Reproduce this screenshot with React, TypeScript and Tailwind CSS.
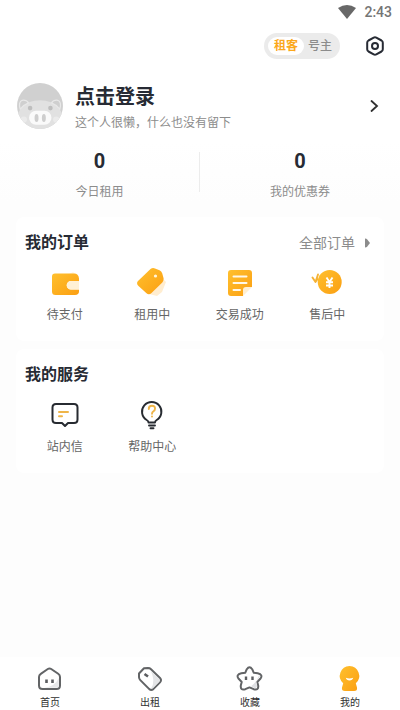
import { useState } from "react";
import type { ReactNode } from "react";

interface Entry {
  label: string;
  icon: ReactNode;
}

const Gradient = ({ id }: { id: string }) => (
  <defs>
    <linearGradient id={id} x1="0" y1="0" x2="1" y2="1">
      <stop offset="0" stopColor="#ffc02e" />
      <stop offset="1" stopColor="#fb9f12" />
    </linearGradient>
  </defs>
);

const WalletIcon = () => (
  <svg viewBox="0 0 32 32" className="size-8" aria-hidden="true">
    <Gradient id="wallet" />
    <path d="M20 7l4-2 4 3z" fill="#fff5e0" />
    <path
      d="M6 6.500h19q4.500 0 5 5V14h-8a4.300 4.300 0 0 0 0 8.600h8v2q0 3.400-4 3.400H6.500Q3 28 3 24.500v-15q0-3 3-3z"
      fill="url(#wallet)"
    />
    <path d="M22 14h8v8.600h-8a4.300 4.300 0 0 1 0-8.600z" fill="#fff1d6" />
  </svg>
);

const TagIcon = () => (
  <svg viewBox="0 0 32 32" className="size-8" aria-hidden="true">
    <Gradient id="tag" />
    <path d="M27 12l3 3-4 10-5 4-8-2z" fill="#ffedd0" />
    <path
      d="M14.500 2q2-1.400 4.500-.6l4.500 1.800q2 1 2.700 3l1.300 4.800q.5 2.500-1.200 4.500L15.500 26q-2.500 2.500-5 .3l-8-7.300q-2.600-2.500-.5-5z"
      fill="url(#tag)"
    />
    <circle cx="19.500" cy="9" r="1.600" fill="#fff6dc" />
  </svg>
);

const NoteIcon = () => (
  <svg viewBox="0 0 32 32" className="size-8" aria-hidden="true">
    <Gradient id="note" />
    <path d="M19 20h9l-9 9z" fill="#ffefd2" />
    <path
      d="M7 3h18q3 0 3 3v14h-6q-3 0-3 3v6H7q-3 0-3-3V6q0-3 3-3z"
      fill="url(#note)"
    />
    <path
      d="M9.500 9.500h13M9.500 16h13M9.500 23h6.500"
      stroke="#fff8e8"
      strokeWidth="2"
      strokeLinecap="round"
    />
  </svg>
);

const RefundIcon = () => (
  <svg viewBox="0 0 32 32" className="size-8" aria-hidden="true">
    <Gradient id="refund" />
    <path
      d="M1.500 10.500l3 4.500L7 7.500M6.500 12l-2 3"
      fill="none"
      stroke="#f5b235"
      strokeWidth="1.900"
      strokeLinecap="round"
      strokeLinejoin="round"
    />
    <circle cx="18.700" cy="15" r="12" fill="url(#refund)" />
    <path
      d="M15.500 10.500l3 4.500 3-4.500M18.500 15v6M15 15.300h7M15 18.500h7"
      fill="none"
      stroke="#fff"
      strokeWidth="1.900"
    />
  </svg>
);

const MessageIcon = () => (
  <svg
    viewBox="0 0 32 32"
    className="size-8"
    fill="none"
    strokeLinecap="round"
    strokeLinejoin="round"
    aria-hidden="true"
  >
    <path
      d="M7 5h18q3.500 0 3.500 3.500v12q0 3.500-3.500 3.500h-6L16 27l-3-3H7q-3.500 0-3.500-3.500v-12Q3.500 5 7 5z"
      stroke="#272b31"
      strokeWidth="2"
    />
    <path d="M10 13h9M10 17.300h3" stroke="#efb548" strokeWidth="2" />
  </svg>
);

const BulbIcon = () => (
  <svg
    viewBox="0 0 32 32"
    className="size-8"
    fill="none"
    strokeLinecap="round"
    strokeLinejoin="round"
    aria-hidden="true"
  >
    <path
      d="M12.500 23.500q0-1.500-1.800-2.500A9.700 9.700 0 1 1 20.700 21q-1.700 1-1.700 2.500zM13 26.500h6M14.500 29.300h3"
      stroke="#272b31"
      strokeWidth="1.900"
    />
    <path
      d="M12.800 10q0-3.200 3.200-3.200T19 9.700q0 1.800-1.800 2.800-1.200.8-1.200 2.300"
      stroke="#efb548"
      strokeWidth="1.900"
    />
    <circle cx="16" cy="17.500" r="1" fill="#efb548" />
  </svg>
);

const PigAvatar = () => (
  <svg viewBox="0 0 46 46" className="size-12 shrink-0" aria-hidden="true">
    <defs>
      <clipPath id="avatar">
        <circle cx="23" cy="23" r="22" />
      </clipPath>
    </defs>
    <g clipPath="url(#avatar)">
      <path d="M0 0h46v46H0z" fill="#d0d0d0" />
      <path d="M1 46q-2-15 5-22 6-6.500 17-6.500T40 24q7 7 5 22z" fill="#e1e1e1" />
      <path
        d="M4 26q-2-7 2-8.500 4-.5 6 2.500-5 2-8 6zM42 26q2-7-2-8.500-4-.5-6 2.500 5 2 8 6z"
        fill="#cfcfcf"
        stroke="#e8e8e8"
        strokeWidth="1.200"
      />
      <circle cx="7.500" cy="36" r="3" fill="#ebebeb" />
      <circle cx="38.500" cy="36" r="3" fill="#ebebeb" />
      <circle cx="13.500" cy="25" r="2.200" fill="#bebebe" />
      <circle cx="33" cy="25" r="2.200" fill="#bebebe" />
      <rect x="12.500" y="27.500" width="21.500" height="13.500" rx="6.700" fill="#fafafa" />
      <ellipse cx="19.700" cy="34.500" rx="1.900" ry="3.800" fill="#cecece" />
      <ellipse cx="26.700" cy="34.500" rx="1.900" ry="3.800" fill="#cecece" />
    </g>
  </svg>
);

const HomeIcon = () => (
  <svg viewBox="0 0 28 28" className="size-7" aria-hidden="true">
    <path
      d="M11.800 4q1.700-1.200 3.400 0l7 4.800q1.800 1.200 1.800 3.200v8.500q0 3.500-3.500 3.500h-14Q3 24 3 20.500V12q0-2 1.800-3.200z"
      fill="#fff"
      stroke="#626466"
      strokeWidth="2"
    />
    <path d="M22.800 13v7.500q0 2.300-2.300 2.300H8q11-1 14.800-9.800z" fill="#e6e7e9" />
    <path d="M10.500 14.500v3.500M16.500 14.500v3.500" stroke="#5b5d60" strokeWidth="2.600" />
  </svg>
);

const RentIcon = () => (
  <svg viewBox="0 0 28 28" className="size-7" aria-hidden="true">
    <path
      d="M8 3.200l4-.2q1.800 0 3 1.200l9 8.800q2 2.200 0 4.400l-6.700 6.700q-2 1.600-4 0l-9-9q-1.200-1.200-1.300-2.800V8.500z"
      fill="#fff"
      stroke="#626466"
      strokeWidth="2"
      strokeLinejoin="round"
    />
    <path d="M14.500 5.200l8.700 8.600q1.300 1.400 0 2.900l-6.500 6.600q-.8.600-1.700.2 5-7.500-.5-18.300z" fill="#e3e4e6" />
    <path d="M8.500 9l3.500 2.500" stroke="#5b5d60" strokeWidth="2.600" />
  </svg>
);

const StarIcon = () => (
  <svg viewBox="0 0 28 28" className="size-7" aria-hidden="true">
    <path
      d="M10.800 4.200q2.700-3.900 5.400 0l1.500 3.500 4 .6q5.800 1.300 2.600 5.500L21.300 17l.9 3.500q.6 5.300-4.500 3.700l-4.200-1.800-4.200 1.800q-5.100 1.600-4.500-3.700l.9-3.500-3-3.200q-3.200-4.200 2.600-5.500l4-.6z"
      fill="#fff"
      stroke="#626466"
      strokeWidth="2"
      strokeLinejoin="round"
    />
    <path d="M23 10.500q1.300.8 0 2.400L20 16.500l1 4.500q0 2.600-2.500 2l-3.500-1.700q5.500-3.800 8-10.800z" fill="#dfe0e3" />
    <path d="M10 11.500v3.500M16.500 11.500v3.500" stroke="#5b5d60" strokeWidth="2.400" />
  </svg>
);

const MineIcon = () => (
  <svg viewBox="0 0 28 28" className="size-7" aria-hidden="true">
    <Gradient id="mine" />
    <path
      d="M13.500 1a9.800 9.800 0 0 1 6.300 17.200l1.200 4.300q.6 3.500-3 3.500H9q-3.600 0-3-3.500l1.200-4.300A9.800 9.800 0 0 1 13.500 1z"
      fill="url(#mine)"
    />
    <path d="M9.800 12.800q3.700 1.200 7.400 0-.8 2.700-3.700 2.700t-3.700-2.700z" fill="#fff" />
  </svg>
);

const orders: Entry[] = [
  { label: "待支付", icon: <WalletIcon /> },
  { label: "租用中", icon: <TagIcon /> },
  { label: "交易成功", icon: <NoteIcon /> },
  { label: "售后中", icon: <RefundIcon /> },
];

const services: Entry[] = [
  { label: "站内信", icon: <MessageIcon /> },
  { label: "帮助中心", icon: <BulbIcon /> },
];

const tabs: Entry[] = [
  { label: "首页", icon: <HomeIcon /> },
  { label: "出租", icon: <RentIcon /> },
  { label: "收藏", icon: <StarIcon /> },
  { label: "我的", icon: <MineIcon /> },
];

const stats = [
  { label: "今日租用", value: 0 },
  { label: "我的优惠券", value: 0 },
];

const roles = ["租客", "号主"];

const Panel = ({
  title,
  entries,
  action,
}: {
  title: string;
  entries: Entry[];
  action?: ReactNode;
}) => (
  <section className="mx-4 rounded-lg bg-white pt-3 pb-4">
    <div className="flex h-7 items-center justify-between pr-[13px] pl-[9px]">
      <h2 className="text-base font-bold text-[#272b34]">{title}</h2>
      {action}
    </div>
    <div className="mt-2.5 grid grid-cols-4 pr-[13px] pl-[5px]">
      {entries.map((entry) => (
        <button
          key={entry.label}
          type="button"
          className="flex flex-col items-center gap-1.5 text-xs leading-5 text-[#666]"
        >
          {entry.icon}
          {entry.label}
        </button>
      ))}
    </div>
  </section>
);

export default function App() {
  const [role, setRole] = useState("租客");

  return (
    <div className="flex min-h-screen flex-col bg-[#fdfdfd] font-[Roboto,'Noto_Sans_CJK_SC',sans-serif]">
      <div className="bg-linear-to-b from-white from-70% to-[#fdfdfd]">
        <div className="flex h-6 items-center justify-end gap-2 pr-2 text-sm font-medium text-[#757575]">
          <svg viewBox="0 0 18 14" className="h-[14px] w-[18px]" aria-hidden="true">
            <path d="M0 3q9-6 18 0L9 14z" fill="#686868" />
          </svg>
          <span>2:43</span>
        </div>

        <header className="flex h-11 items-center justify-end gap-[25px] pr-[15px]">
          <div className="flex rounded-full bg-[#ebebeb] p-1 text-xs leading-4">
            {roles.map((item) => (
              <button
                key={item}
                type="button"
                aria-pressed={role === item}
                onClick={() => setRole(item)}
                className={
                  role === item
                    ? "rounded-full bg-white px-1.5 py-px font-bold text-[#fba81c]"
                    : "px-1 py-px font-medium text-[#8c8c8c]"
                }
              >
                {item}
              </button>
            ))}
          </div>
          <button type="button" aria-label="设置">
            <svg
              viewBox="0 0 20 20"
              className="size-5"
              fill="none"
              stroke="#272b34"
              strokeWidth="2"
              strokeLinejoin="round"
              aria-hidden="true"
            >
              <path d="M8.700 1.700q1.300-.7 2.600 0l5.200 2.800q1.300.8 1.300 2.200v6.600q0 1.400-1.300 2.200l-5.200 2.800q-1.300.7-2.600 0l-5.200-2.800q-1.300-.8-1.300-2.200V6.700q0-1.400 1.300-2.200z" />
              <circle cx="10" cy="10" r="3" />
            </svg>
          </button>
        </header>

        <button
          type="button"
          className="flex w-full items-center gap-[11px] px-4 pt-[11px] text-left"
        >
          <PigAvatar />
          <span className="flex flex-1 flex-col pt-0.5">
            <span className="text-xl leading-8 font-bold text-[#272b34]">点击登录</span>
            <span className="text-xs leading-5 text-[#8c8c8c]">
              这个人很懒，什么也没有留下
            </span>
          </span>
          <svg
            viewBox="0 0 20 20"
            className="size-5"
            fill="none"
            stroke="#303030"
            strokeWidth="1.800"
            strokeLinecap="round"
            aria-hidden="true"
          >
            <path d="M7.500 5l5.500 5-5.500 5" />
          </svg>
        </button>

        <dl className="mt-4 grid grid-cols-2">
          {stats.map((stat, index) => (
            <div key={stat.label} className="flex">
              <div className="flex flex-1 flex-col-reverse items-center gap-[9px]">
                <dt className="text-xs leading-5 text-[#8c8c8c]">{stat.label}</dt>
                <dd className="text-xl leading-6 font-bold text-[#272b34]">{stat.value}</dd>
              </div>
              {index === 0 && <div className="mt-[3px] h-10 w-px bg-[#ececec]" />}
            </div>
          ))}
        </dl>
      </div>

      <main className="mt-[15px] mb-4 flex flex-1 flex-col gap-2">
        <Panel
          title="我的订单"
          entries={orders}
          action={
            <a href="#orders" className="flex items-center gap-2 text-sm text-[#8c8c8c]">
              全部订单
              <svg viewBox="0 0 8 12" className="h-3 w-2" aria-hidden="true">
                <path d="M2 1.500q1.500 0 2.500 1.200L7 6 4.500 9.300q-1 1.200-2.500 1.200z" fill="#8c8c8c" />
              </svg>
            </a>
          }
        />
        <Panel title="我的服务" entries={services} />
      </main>

      <nav className="grid grid-cols-4 bg-white pt-2">
        {tabs.map((tab) => (
          <a
            key={tab.label}
            href="#"
            aria-current={tab.label === "我的" ? "page" : undefined}
            className="flex flex-col items-center gap-[3px] text-[10px] leading-[14px] text-[#303030]"
          >
            {tab.icon}
            {tab.label}
          </a>
        ))}
      </nav>
    </div>
  );
}
